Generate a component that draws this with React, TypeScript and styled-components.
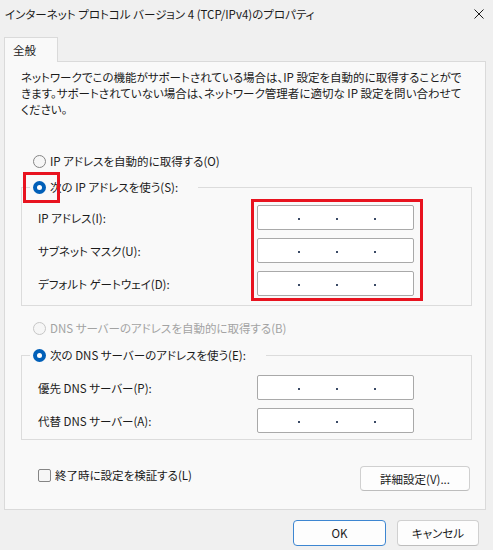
import styled, { createGlobalStyle } from "styled-components";

const GlobalStyle = createGlobalStyle`
  html, body {
    margin: 0;
    padding: 0;
    background: #f0f0f0;
  }
  body {
    font-family: "Noto Sans CJK JP", "Noto Sans", sans-serif;
    font-size: 11.5px;
    color: #1b1b1b;
    font-feature-settings: "palt";
  }
  * {
    box-sizing: border-box;
  }
`;

type FieldDef = { label: string };

const ipFields: FieldDef[] = [
  { label: "IP アドレス(I):" },
  { label: "サブネット マスク(U):" },
  { label: "デフォルト ゲートウェイ(D):" },
];

const dnsFields: FieldDef[] = [
  { label: "優先 DNS サーバー(P):" },
  { label: "代替 DNS サーバー(A):" },
];

function CloseIcon() {
  return (
    <svg width="10" height="10" viewBox="0 0 10 10">
      <path d="M0.5 0.5 L9.5 9.5 M9.5 0.5 L0.5 9.5" stroke="#1b1b1b" strokeWidth="1" fill="none" />
    </svg>
  );
}

function IpInput() {
  return (
    <IpBox>
      <Dot />
      <Dot />
      <Dot />
    </IpBox>
  );
}

function FieldGroup({
  fields,
  highlight,
  $pt,
  $pb,
}: {
  fields: FieldDef[];
  highlight?: boolean;
  $pt: number;
  $pb: number;
}) {
  return (
    <GroupContent $pt={$pt} $pb={$pb}>
      <LabelColumn>
        {fields.map((f) => (
          <FieldLabel key={f.label}>{f.label}</FieldLabel>
        ))}
      </LabelColumn>
      <InputColumn $highlight={highlight}>
        {fields.map((f) => (
          <IpInput key={f.label} />
        ))}
      </InputColumn>
    </GroupContent>
  );
}

export default function App() {
  return (
    <>
      <GlobalStyle />
      <Window>
        <TitleBar>
          <Title>インターネット プロトコル バージョン 4 (TCP/IPv4)のプロパティ</Title>
          <CloseButton>
            <CloseIcon />
          </CloseButton>
        </TitleBar>
        <Body>
          <TabStrip>
            <Tab>全般</Tab>
          </TabStrip>
          <Panel>
            <Description>
              ネットワークでこの機能がサポートされている場合は、IP 設定を自動的に取得することがで
              <br />
              きます。サポートされていない場合は、ネットワーク管理者に適切な IP 設定を問い合わせて
              <br />
              ください。
            </Description>

            <RadioRow $mt={35}>
              <Radio />
              <span>IP アドレスを自動的に取得する(O)</span>
            </RadioRow>

            <Group $mt={8}>
              <Legend>
                <RadioRow>
                  <Radio checked $highlight />
                  <span>次の IP アドレスを使う(S):</span>
                </RadioRow>
              </Legend>
              <FieldGroup fields={ipFields} highlight $pt={9} $pb={9} />
            </Group>

            <RadioRow $mt={13} $disabled>
              <Radio disabled />
              <span>DNS サーバーのアドレスを自動的に取得する(B)</span>
            </RadioRow>

            <Group $mt={9}>
              <Legend>
                <RadioRow>
                  <Radio checked />
                  <span>次の DNS サーバーのアドレスを使う(E):</span>
                </RadioRow>
              </Legend>
              <FieldGroup fields={dnsFields} $pt={11} $pb={6} />
            </Group>

            <BottomRow>
              <CheckRow>
                <Checkbox />
                <span>終了時に設定を検証する(L)</span>
              </CheckRow>
              <Button $w={110} $h={25}>詳細設定(V)...</Button>
            </BottomRow>
          </Panel>
          <Footer>
            <Button $w={93} $h={26} $primary>OK</Button>
            <Button $w={82} $h={26}>キャンセル</Button>
          </Footer>
        </Body>
      </Window>
    </>
  );
}

const Window = styled.div`
  width: 493px;
  height: 550px;
  background: #f0f0f0;
  display: flex;
  flex-direction: column;
  overflow: hidden;
`;

const TitleBar = styled.div`
  height: 30px;
  display: flex;
  align-items: center;
  justify-content: space-between;
  padding: 0 9px 2px 5px;
`;

const Title = styled.div`
  color: #1b1b1b;
  white-space: nowrap;
`;

const CloseButton = styled.div`
  display: flex;
  align-items: center;
  justify-content: center;
  width: 10px;
  height: 10px;
`;

const Body = styled.div`
  padding: 0 7px 0 4px;
`;

const TabStrip = styled.div`
  display: flex;
  margin-top: 7px;
`;

const Tab = styled.div`
  position: relative;
  z-index: 1;
  width: 54px;
  height: 25px;
  margin-bottom: -1px;
  padding-left: 8px;
  display: flex;
  align-items: center;
  background: #f9f9f9;
  border: 1px solid #dadada;
  border-bottom: none;
  color: #1b1b1b;
`;

const Panel = styled.div`
  width: 482px;
  background: #f9f9f9;
  border: 1px solid #dadada;
  padding: 7px 13px 18px 16px;
`;

const Description = styled.p`
  margin: 0;
  line-height: 16px;
  white-space: nowrap;
`;

const RadioRow = styled.div<{ $mt?: number; $disabled?: boolean }>`
  display: flex;
  align-items: center;
  gap: 4px;
  height: 18px;
  margin-top: ${(p) => p.$mt ?? 0}px;
  margin-left: ${(p) => (p.$mt !== undefined ? 12 : 0)}px;
  color: ${(p) => (p.$disabled ? "#a3a3a3" : "#1b1b1b")};
  white-space: nowrap;
`;

const Radio = styled.span<{ checked?: boolean; disabled?: boolean; $highlight?: boolean }>`
  position: relative;
  flex: none;
  width: 13px;
  height: 13px;
  border-radius: 50%;
  background: ${(p) => (p.checked ? "#005fb8" : "#f6f6f6")};
  border: ${(p) =>
    p.checked ? "none" : p.disabled ? "1px solid #c6c6c6" : "1px solid #858585"};

  &::before {
    content: "";
    display: ${(p) => (p.checked ? "block" : "none")};
    position: absolute;
    left: 4px;
    top: 4px;
    width: 5px;
    height: 5px;
    border-radius: 50%;
    background: #ffffff;
  }

  &::after {
    content: "";
    display: ${(p) => (p.$highlight ? "block" : "none")};
    position: absolute;
    left: -10px;
    top: -9px;
    width: 31px;
    height: 25px;
    border: 3px solid #e8131f;
  }
`;

const Group = styled.fieldset<{ $mt: number }>`
  margin: ${(p) => p.$mt}px 0 0 0;
  padding: 0;
  min-width: 0;
  border: 1px solid #dcdcdc;
`;

const Legend = styled.legend`
  margin-left: 8px;
  padding: 0 20px 0 3px;
`;

const GroupContent = styled.div<{ $pt: number; $pb: number }>`
  display: flex;
  padding: ${(p) => p.$pt}px 0 ${(p) => p.$pb}px 16px;
`;

const LabelColumn = styled.div`
  width: 219px;
  display: flex;
  flex-direction: column;
  gap: 8px;
`;

const FieldLabel = styled.div`
  height: 25px;
  display: flex;
  align-items: center;
  white-space: nowrap;
`;

const InputColumn = styled.div<{ $highlight?: boolean }>`
  position: relative;
  display: flex;
  flex-direction: column;
  gap: 8px;

  &::after {
    content: "";
    display: ${(p) => (p.$highlight ? "block" : "none")};
    position: absolute;
    left: -6px;
    top: -6px;
    right: -9px;
    bottom: -5px;
    border: 3px solid #e8131f;
    pointer-events: none;
  }
`;

const IpBox = styled.div`
  width: 157px;
  height: 25px;
  display: flex;
  align-items: flex-end;
  gap: 36px;
  padding: 0 0 9px 40px;
  background: #ffffff;
  border: 1px solid #a9a9a9;
  border-radius: 2px;
`;

const Dot = styled.span`
  width: 2px;
  height: 2px;
  background: #3a4a66;
`;

const BottomRow = styled.div`
  display: flex;
  justify-content: space-between;
  align-items: flex-start;
  margin-top: 26px;
  padding-right: 2px;
`;

const CheckRow = styled.div`
  display: flex;
  align-items: center;
  gap: 4px;
  margin: 1px 0 0 17px;
  height: 16px;
  white-space: nowrap;
`;

const Checkbox = styled.span`
  flex: none;
  width: 13px;
  height: 13px;
  border: 1px solid #858585;
  border-radius: 2px;
  background: #f6f6f6;
`;

const Button = styled.div<{ $w: number; $h: number; $primary?: boolean }>`
  width: ${(p) => p.$w}px;
  height: ${(p) => p.$h}px;
  display: flex;
  align-items: center;
  justify-content: center;
  background: #fdfdfd;
  border: 1px solid ${(p) => (p.$primary ? "#3d86d1" : "#d0d0d0")};
  border-bottom-color: ${(p) => (p.$primary ? "#3d86d1" : "#bdbdbd")};
  border-radius: 4px;
  color: #1b1b1b;
  white-space: nowrap;
`;

const Footer = styled.div`
  display: flex;
  justify-content: flex-end;
  gap: 11px;
  padding: 10px 7px 0 0;
`;
